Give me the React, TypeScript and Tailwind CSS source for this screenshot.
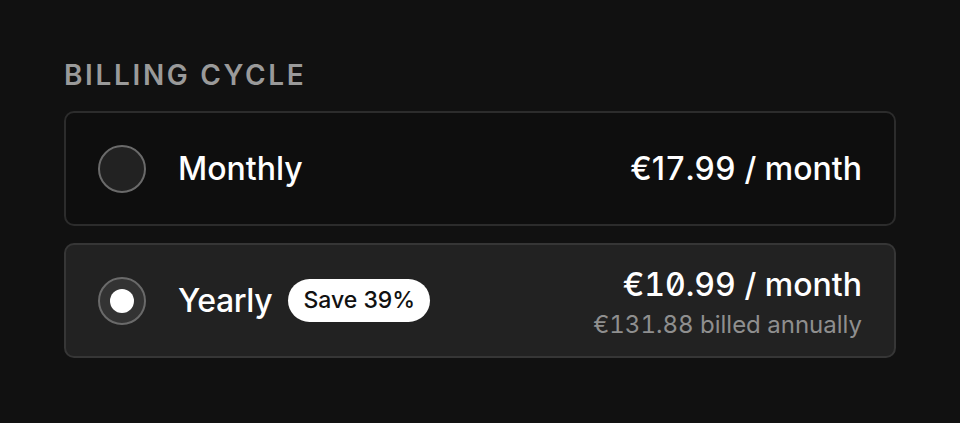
import React from "react";

export default function App() {
  return (
    <div
      className="w-[960px] h-[423px] bg-[#111111] px-16 pt-[55px]"
      style={{ fontFamily: "Inter, 'Noto Sans', sans-serif" }}
    >
      <div className="text-[28px] leading-[40px] font-semibold tracking-[0.095em] uppercase text-[#9a9a9a]">
        Billing cycle
      </div>
      <div className="mt-4 flex flex-col gap-[17px]">
        <div className="flex items-center min-h-[115px] rounded-[10px] border-2 border-[#2c2c2c] bg-[#0e0e0e] px-8">
          <div className="w-12 h-12 rounded-full border-2 border-[#6a6a6a] bg-[#222222]" />
          <div className="ml-8 text-[32px] leading-[40px] font-medium text-white">Monthly</div>
          <div className="ml-auto text-[32px] leading-[40px] font-medium text-white tabular-nums">
            €<span className="proportional-nums">1</span>7.99 / month
          </div>
        </div>
        <div className="flex items-center min-h-[115px] rounded-[10px] border-2 border-[#363636] bg-[#222222] px-8">
          <div className="w-12 h-12 rounded-full border-2 border-[#6a6a6a] bg-[#333333] flex items-center justify-center">
            <div className="w-6 h-6 rounded-full bg-white" />
          </div>
          <div className="ml-8 text-[32px] leading-[40px] font-medium text-white tracking-[-0.01em]">Yearly</div>
          <div className="ml-4 rounded-full bg-white px-[15px] py-[5px] text-[23px] leading-[33px] font-medium text-[#111111]">
            Save 39%
          </div>
          <div className="ml-auto mt-[4px] flex flex-col items-end">
            <div className="text-[32px] leading-[40px] font-medium text-white tabular-nums slashed-zero">€10.99 / month</div>
            <div className="mt-1 text-[24px] leading-[32px] text-[#8f8f8f] tabular-nums">€131.88 billed annually</div>
          </div>
        </div>
      </div>
    </div>
  );
}
